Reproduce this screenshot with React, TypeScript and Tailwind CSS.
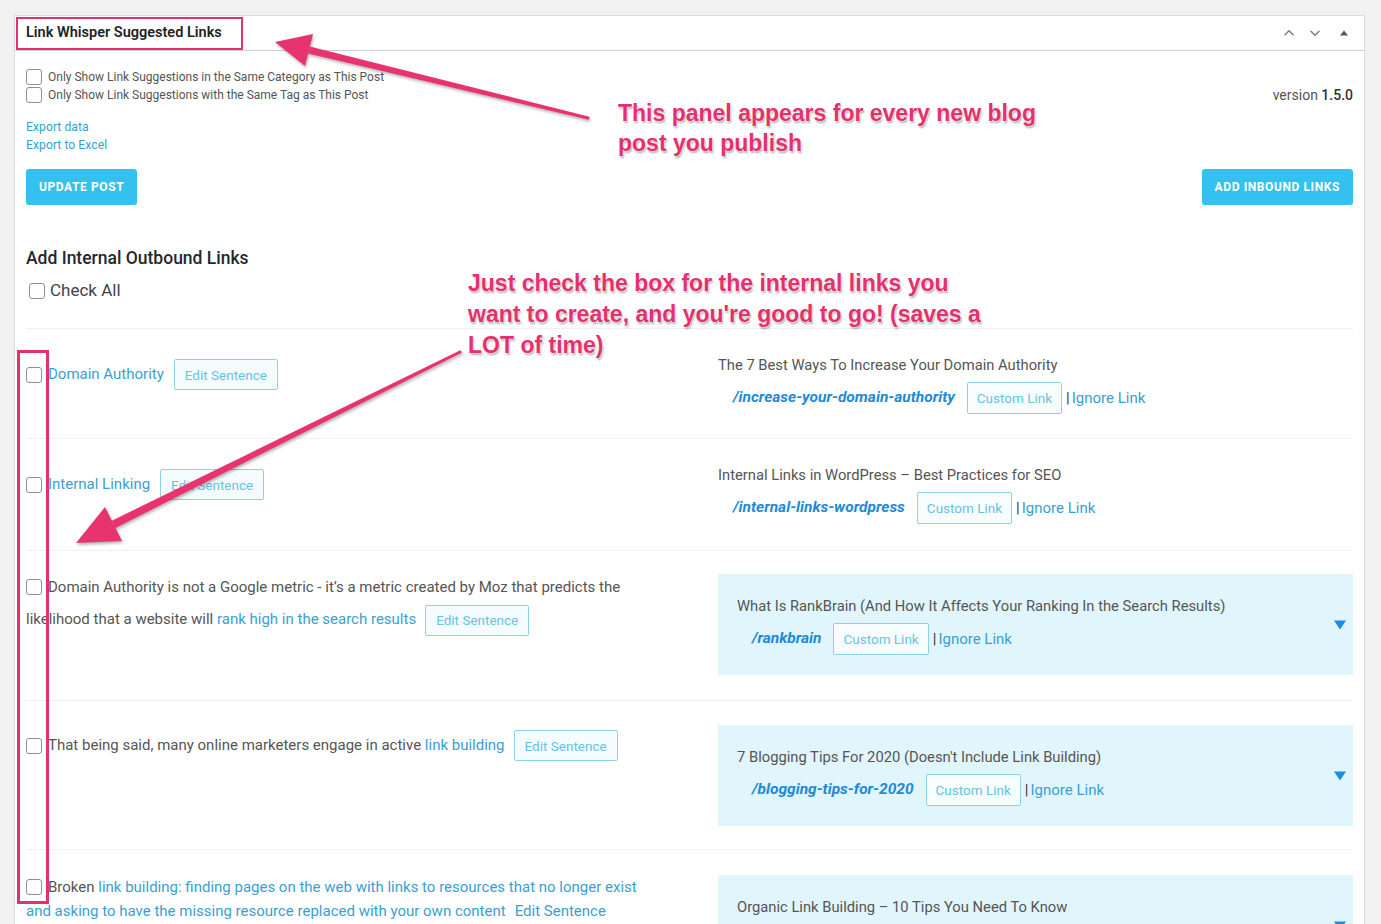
import React from "react";

const Box = ({ className = "" }: { className?: string }) => (
  <span className={"inline-block w-[16px] h-[16px] rounded-[3px] border border-[#8c8f94] bg-white align-middle shrink-0 " + className} />
);

const EditBtn = ({ className = "" }: { className?: string }) => (
  <span className={"inline-flex items-center h-[31px] px-[10px] border border-[#8fd0e6] bg-[#f5fcff] rounded-[2px] text-[13.5px] leading-[20px] text-[#66c3e2] align-middle " + className}>
    Edit Sentence
  </span>
);

const UrlLine = ({ url }: { url: string }) => (
  <div className="flex items-center mt-[5px]">
    <span className="text-[15.5px] font-bold italic text-[#1e8ad8]">{url}</span>
    <span className="ml-[12px] inline-flex items-center h-[32px] px-[9px] border border-[#8fd0e6] bg-[#f7fdff] rounded-[2px] text-[13.5px] text-[#66c3e2]">
      Custom Link
    </span>
    <span className="ml-[4px] text-[15px] text-[#333]">|</span>
    <span className="ml-[2px] text-[15px] text-[#3a9fd2]">Ignore Link</span>
  </div>
);

const Plain = ({ title, url }: { title: string; url: string }) => (
  <div>
    <div className="h-[24px] leading-[24px] text-[14.75px] text-[#555]">{title}</div>
    <div className="pl-[15px]">
      <UrlLine url={url} />
    </div>
  </div>
);

const BlueBox = ({ title, url }: { title: string; url: string }) => (
  <div className="relative bg-[#e1f5fd] py-[20px] pl-[19px] pr-[30px] h-[101px]">
    <div className="h-[24px] leading-[24px] text-[14.75px] text-[#555]">{title}</div>
    <div className="pl-[15px]">
      <UrlLine url={url} />
    </div>
    <div className="absolute right-[7px] top-1/2 -translate-y-1/2 w-0 h-0 border-l-[6px] border-r-[6px] border-t-[9px] border-l-transparent border-r-transparent border-t-[#1e8ce0]" />
  </div>
);

const Link = ({ children }: { children: React.ReactNode }) => (
  <span className="text-[#3a9fd2]">{children}</span>
);

const shadow = "[text-shadow:0_0_2px_#fff,0_0_2px_#fff,1px_2px_2px_rgba(0,0,0,0.35)]";

export default function App() {
  return (
    <div className="relative w-full h-[924px] overflow-hidden bg-[#f1f1f1] [font-family:Roboto,'Noto_Sans',sans-serif] text-[#555]">
      <div className="ml-[14px] mt-[15px] w-[1351px] bg-white border border-[#dcdcde] min-h-[920px]">
        {/* header */}
        <div className="h-[35px] border-b border-[#cfcfcf] flex items-center pl-[11px] pr-[16px]">
          <span className="text-[14.5px] font-semibold text-[#1d2327]">Link Whisper Suggested Links</span>
          <div className="ml-auto flex items-center text-[#787c82]">
            <svg width="14" height="14" viewBox="0 0 24 24" fill="none" stroke="currentColor" strokeWidth="2.4" strokeLinecap="round" strokeLinejoin="round"><path d="M5 15l7-7 7 7" /></svg>
            <svg className="ml-[12px]" width="14" height="14" viewBox="0 0 24 24" fill="none" stroke="currentColor" strokeWidth="2.4" strokeLinecap="round" strokeLinejoin="round"><path d="M5 9l7 7 7-7" /></svg>
            <svg className="ml-[18px]" width="8" height="8" viewBox="0 0 8 8"><path d="M0 6.5L4 1.5L8 6.5Z" fill="#50575e" /></svg>
          </div>
        </div>

        {/* body */}
        <div className="px-[11px]">
          <div className="flex justify-between pt-[17px]">
            <div className="flex flex-col">
              <div className="flex items-center h-[18px] text-[12px] text-[#555]"><Box /><span className="ml-[6px]">Only Show Link Suggestions in the Same Category as This Post</span></div>
              <div className="flex items-center h-[18px] text-[12px] text-[#555]"><Box /><span className="ml-[6px]">Only Show Link Suggestions with the Same Tag as This Post</span></div>
              <div className="mt-[14px] text-[12.25px] leading-[18px] text-[#3a9fd2]">Export data</div>
              <div className="text-[12.25px] leading-[18px] text-[#3a9fd2]">Export to Excel</div>
              <div className="mt-[15px] self-start h-[36px] px-[13px] flex items-center bg-[#33c1f0] rounded-[3px] text-white text-[12px] font-bold tracking-[0.6px]">UPDATE POST</div>
            </div>
            <div className="flex flex-col justify-between items-end">
              <div className="pt-[18px] text-[14px] leading-[18px] text-[#555]">version <span className="font-medium text-[#333]">1.5.0</span></div>
              <div className="h-[36px] px-[13px] flex items-center bg-[#33c1f0] rounded-[3px] text-white text-[12px] font-bold tracking-[0.6px]">ADD INBOUND LINKS</div>
            </div>
          </div>

          <div className="mt-[41px] text-[17.5px] leading-[24px] font-medium text-[#23282d]">Add Internal Outbound Links</div>
          <div className="mt-[10px] flex items-center h-[22px] text-[17px] text-[#444]"><Box className="ml-[3px]" /><span className="ml-[5px]">Check All</span></div>

          <div className="mt-[26px]">
            {/* row 1 */}
            <div className="flex items-start justify-between border-t border-[#f0f0f1] py-[24px]">
              <div className="w-[625px] pt-[6px] flex items-center text-[15px]"><Box /><span className="ml-[6px]"><Link>Domain Authority</Link></span><EditBtn className="ml-[10px]" /></div>
              <div className="w-[635px]"><Plain title="The 7 Best Ways To Increase Your Domain Authority" url="/increase-your-domain-authority" /></div>
            </div>
            {/* row 2 */}
            <div className="flex items-start justify-between border-t border-[#f0f0f1] pt-[24px] pb-[26px]">
              <div className="w-[625px] pt-[6px] flex items-center text-[15px]"><Box /><span className="ml-[6px]"><Link>Internal Linking</Link></span><EditBtn className="ml-[10px]" /></div>
              <div className="w-[635px]"><Plain title="Internal Links in WordPress – Best Practices for SEO" url="/internal-links-wordpress" /></div>
            </div>
            {/* row 3 */}
            <div className="flex items-start justify-between border-t border-[#f0f0f1] pt-[23px] pb-[25px]">
              <div className="w-[625px] -mt-[3px] text-[15px] leading-[32px] text-[#555]">
                <Box className="mr-[6px] -mt-[2px]" />Domain Authority is not a Google metric - it’s a metric created by Moz that predicts the likelihood that a website will <Link>rank high in the search results</Link>
                <EditBtn className="ml-[9px]" />
              </div>
              <div className="w-[635px]"><BlueBox title="What Is RankBrain (And How It Affects Your Ranking In the Search Results)" url="/rankbrain" /></div>
            </div>
            {/* row 4 */}
            <div className="flex items-start justify-between border-t border-[#f0f0f1] pt-[24px] pb-[23px]">
              <div className="w-[625px] pt-[5px] flex items-center text-[15px] text-[#555]"><Box /><span className="ml-[6px]">That being said, many online marketers engage in active <Link>link building</Link></span><EditBtn className="ml-[9px]" /></div>
              <div className="w-[635px]"><BlueBox title="7 Blogging Tips For 2020 (Doesn't Include Link Building)" url="/blogging-tips-for-2020" /></div>
            </div>
            {/* row 5 */}
            <div className="flex items-start justify-between border-t border-[#f0f0f1] pt-[25px] pb-[24px]">
              <div className="w-[625px] text-[15px] leading-[24px] text-[#555]">
                <Box className="mr-[6px] -mt-[2px]" />Broken <Link>link building: finding pages on the web with links to resources that no longer exist and asking to have the missing resource replaced with your own content</Link>
                <span className="ml-[9px] text-[#3a9fd2]">Edit Sentence</span>
              </div>
              <div className="w-[635px]"><BlueBox title="Organic Link Building – 10 Tips You Need To Know" url="/organic-link-building" /></div>
            </div>
          </div>
        </div>
      </div>

      {/* annotation overlays */}
      <div className="absolute left-[16px] top-[17px] w-[227px] h-[33px] border-[2px] border-[#e2316c]" />
      <div className="absolute left-[17px] top-[350px] w-[32px] h-[554px] border-[3px] border-[#e2316c]" />

      <svg className="absolute left-0 top-0 pointer-events-none drop-shadow-[1px_2px_1.5px_rgba(0,0,0,0.3)]" width="1381" height="924" viewBox="0 0 1381 924">
        <polygon fill="#e8336f" points="588.4,116.5 309.8,46.6 308.2,53.4 587.6,119.5" />
        <circle cx="588" cy="118" r="1.6" fill="#e8336f" />
        <polygon fill="#e8336f" points="275,42 313,34 305,66" />
        <polygon fill="#e8336f" points="460.7,353.3 115.4,527.9 111.8,520.7 459.3,350.7" />
        <circle cx="460" cy="352" r="1.6" fill="#e8336f" />
        <polygon fill="#e8336f" points="76,543 105,507 122,541" />
      </svg>

      <div className={"absolute left-[618px] top-[98px] text-[23px] leading-[30px] font-bold text-[#e4306c] whitespace-nowrap [font-family:'Liberation_Sans',Arial,sans-serif] " + shadow}>
        This panel appears for every new blog<br />post you publish
      </div>
      <div className={"absolute left-[468px] top-[268px] text-[23px] leading-[31px] font-bold text-[#e4306c] whitespace-nowrap [font-family:'Liberation_Sans',Arial,sans-serif] " + shadow}>
        Just check the box for the internal links you<br />want to create, and you're good to go! (saves a<br />LOT of time)
      </div>
    </div>
  );
}
